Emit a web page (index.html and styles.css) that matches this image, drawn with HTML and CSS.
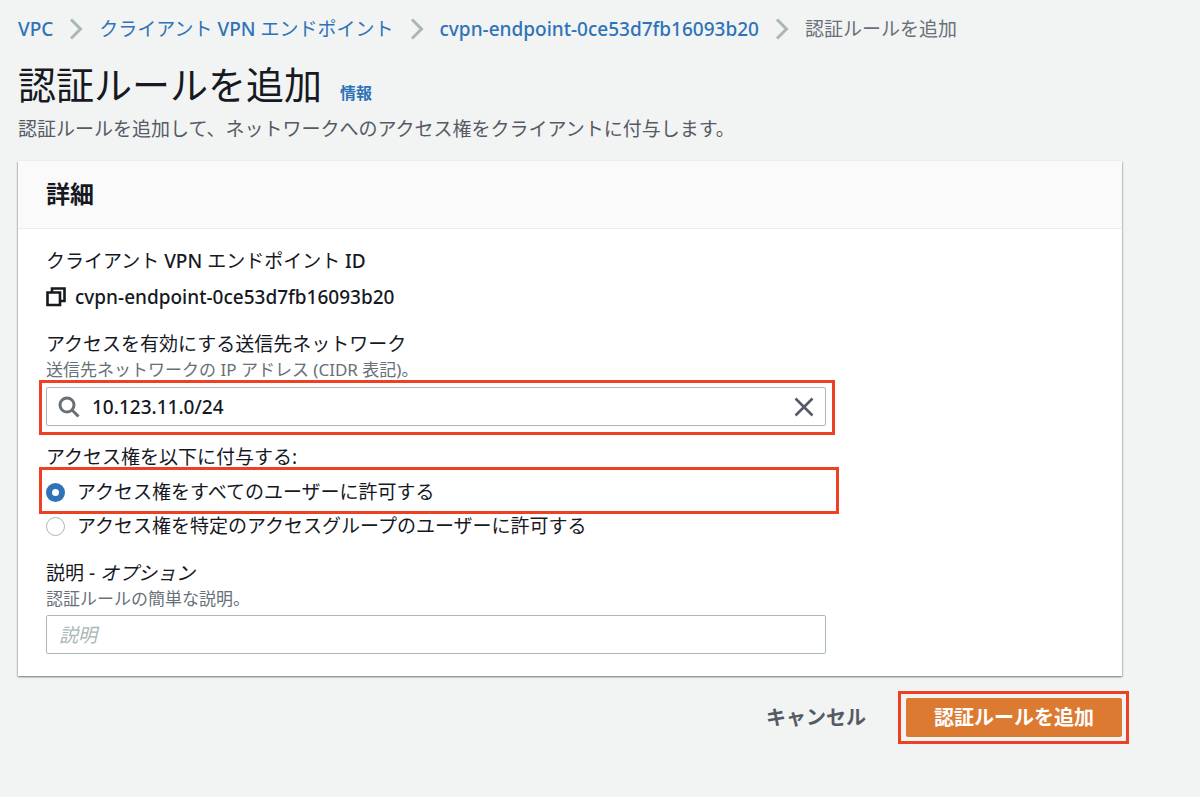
FILE: index.html
```html
<!DOCTYPE html>
<html lang="ja">
<head>
  <meta charset="UTF-8">
  <meta name="viewport" content="width=device-width, initial-scale=1.0">
  <title>認証ルールを追加</title>
  <link rel="stylesheet" href="styles.css">
</head>
<body>
  <main class="page">
    <nav class="breadcrumb">
      <a href="#" class="latin">VPC</a>
      <svg class="chevron" viewBox="0 0 13 22"><path d="M1.5 1.5 L11 11 L1.5 20.5"/></svg>
      <a href="#">クライアント <span class="latin">VPN</span> エンドポイント</a>
      <svg class="chevron" viewBox="0 0 13 22"><path d="M1.5 1.5 L11 11 L1.5 20.5"/></svg>
      <a href="#" class="latin">cvpn-endpoint-0ce53d7fb16093b20</a>
      <svg class="chevron" viewBox="0 0 13 22"><path d="M1.5 1.5 L11 11 L1.5 20.5"/></svg>
      <span>認証ルールを追加</span>
    </nav>

    <div class="title">
      <h1>認証ルールを追加</h1>
      <a href="#" class="info">情報</a>
    </div>
    <p class="lead">認証ルールを追加して、ネットワークへのアクセス権をクライアントに付与します。</p>

    <form id="ruleForm">
      <section class="card">
        <h2>詳細</h2>
        <div class="card-body">
          <div class="field">
            <div class="label">クライアント <span class="latin">VPN</span> エンドポイント <span class="latin">ID</span></div>
            <div class="endpoint">
              <button type="button" class="icon-btn" aria-label="コピー">
                <svg width="20" height="20" viewBox="0 0 20 20" fill="none" stroke="#16191f" stroke-width="2.6">
                  <path d="M1.5 5.5H14V18H1.5Z"/>
                  <path d="M6 5.5V1.5H18.5V14H14"/>
                </svg>
              </button>
              <span class="latin">cvpn-endpoint-0ce53d7fb16093b20</span>
            </div>
          </div>

          <div class="field">
            <label class="label" for="cidr">アクセスを有効にする送信先ネットワーク</label>
            <div class="hint">送信先ネットワークの IP アドレス (CIDR 表記)。</div>
            <div class="highlight highlight-input">
              <div class="search-box">
                <svg width="22" height="22" viewBox="0 0 22 22" fill="none" stroke="#687078" stroke-width="3">
                  <circle cx="9" cy="9" r="7"/>
                  <path d="M14 14 L20.5 20.5"/>
                </svg>
                <input type="text" id="cidr" name="cidr" value="10.123.11.0/24">
                <button type="button" class="icon-btn" aria-label="クリア">
                  <svg width="20" height="20" viewBox="0 0 20 20" fill="none" stroke="#545b64" stroke-width="2.6">
                    <path d="M1.5 1.5 L18.5 18.5 M18.5 1.5 L1.5 18.5"/>
                  </svg>
                </button>
              </div>
            </div>
          </div>

          <fieldset class="field">
            <legend class="label">アクセス権を以下に付与する:</legend>
            <div class="highlight highlight-radio">
              <label class="radio"><input type="radio" name="access" value="all" checked>アクセス権をすべてのユーザーに許可する</label>
            </div>
            <label class="radio"><input type="radio" name="access" value="group">アクセス権を特定のアクセスグループのユーザーに許可する</label>
          </fieldset>

          <div class="field">
            <label class="label" for="description">説明 - <em>オプション</em></label>
            <div class="hint">認証ルールの簡単な説明。</div>
            <input class="text-input" type="text" id="description" name="description" placeholder="説明">
          </div>
        </div>
      </section>

      <div class="actions">
        <button type="button" class="btn-cancel">キャンセル</button>
        <div class="highlight highlight-submit">
          <button type="submit" class="btn-submit">認証ルールを追加</button>
        </div>
      </div>
    </form>
  </main>
</body>
</html>
```
FILE: styles.css
```css
* {
  box-sizing: border-box;
}
body {
  margin: 0;
  background-color: #f2f3f3;
  color: #16191f;
  font-family: "Noto Sans", "Noto Sans CJK JP", sans-serif;
  font-size: 19px;
  line-height: 26px;
}
input, button {
  font: inherit;
  color: inherit;
}
svg {
  display: block;
  flex: none;
}
a {
  color: #2e73b8;
  text-decoration: none;
}
.latin {
  font-weight: 500;
}
.page {
  padding: 16px 78px 40px 18px;
}

.breadcrumb {
  display: flex;
  align-items: center;
  gap: 16px;
  color: #687078;
}
.chevron {
  width: 14px;
  height: 22px;
  fill: none;
  stroke: #aab7b8;
  stroke-width: 3;
}

.title {
  display: flex;
  align-items: baseline;
  gap: 18px;
  margin-top: 20px;
}
h1 {
  margin: 0;
  font-size: 38px;
  font-weight: 400;
  line-height: 44px;
}
.info {
  font-size: 16px;
  font-weight: 700;
}
.lead {
  margin: 10px 0 19px;
  color: #545b64;
}

.card {
  background: #fff;
  box-shadow: 0 1px 2px rgba(0, 28, 36, 0.4), 1px 1px 1px rgba(0, 28, 36, 0.1), -1px 1px 1px rgba(0, 28, 36, 0.1);
}
h2 {
  margin: 0;
  padding: 17px 28px 18px;
  background: #fafafa;
  border-bottom: 1px solid #eaeded;
  font-size: 24px;
  line-height: 32px;
}
.card-body {
  display: flex;
  flex-direction: column;
  gap: 21px;
  padding: 19px 28px 22px;
}
.field {
  width: 100%;
  max-width: 780px;
  margin: 0;
  padding: 0;
  border: 0;
}
.label {
  display: block;
  padding: 0;
}
.hint {
  margin: 1px 0 4px;
  color: #687078;
  font-size: 17px;
  line-height: 24px;
}
.endpoint {
  display: flex;
  align-items: center;
  gap: 9px;
  margin-top: 10px;
}
.icon-btn {
  padding: 0;
  border: 0;
  background: none;
  cursor: pointer;
}

/* red frames around the steps */
.highlight {
  border: 3px solid #ee4023;
}
.highlight-input {
  margin: -6px -9px -12px -7px;
  padding: 4px 6px 6px 4px;
}
.highlight-radio {
  margin: -3px -13px -1px -7px;
  padding: 9px 10px 6px 4px;
}
.highlight-submit {
  margin: -7px -7px -7px 0;
  padding: 4px 4px 4px 5px;
}

.search-box, .text-input {
  display: flex;
  align-items: center;
  width: 100%;
  height: 39px;
  padding: 0 11px 0 12px;
  border: 1px solid #aab7b8;
  border-radius: 2px;
  background: #fff;
}
.search-box {
  gap: 12px;
  padding-left: 11px;
}
.search-box input {
  flex: 1;
  min-width: 0;
  padding: 0;
  border: 0;
  outline: none;
  background: none;
  font-weight: 500;
}
.text-input::placeholder {
  color: #aab7b8;
  font-style: italic;
}

.radio {
  display: flex;
  align-items: center;
  gap: 12px;
}
.radio input {
  appearance: none;
  width: 19px;
  height: 19px;
  margin: 0;
  border: 1px solid #aab7b8;
  border-radius: 50%;
  background: #fff;
}
.radio input:checked {
  border: 6px solid #2e73b8;
}

.actions {
  display: flex;
  justify-content: flex-end;
  align-items: center;
  gap: 12px;
  margin-top: 22px;
}
.actions button {
  display: block;
  height: 39px;
  padding: 0 28px;
  border: 0;
  border-radius: 2px;
  font-size: 20px;
  font-weight: 700;
  cursor: pointer;
}
.actions .btn-cancel {
  padding: 0 20px;
  background: none;
  color: #545b64;
}
.actions .btn-submit {
  background: #dd7a32;
  color: #fff;
}
```
